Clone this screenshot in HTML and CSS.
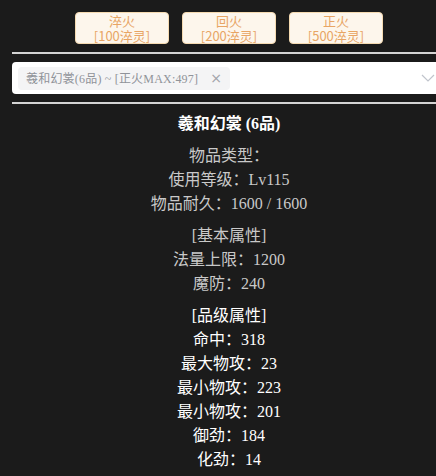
FILE: index.html
```html
<!DOCTYPE html>
<html lang="zh-CN">
<head>
<meta charset="utf-8">
<title>装备</title>
<link rel="stylesheet" href="styles.css">
</head>
<body>
<div class="wrap">
  <div class="btns">
    <button class="btn"><span class="ln">淬火</span><span class="ln">[100淬灵]</span></button>
    <button class="btn"><span class="ln">回火</span><span class="ln">[200淬灵]</span></button>
    <button class="btn"><span class="ln">正火</span><span class="ln">[500淬灵]</span></button>
  </div>
  <div class="rule"></div>
  <div class="select">
    <span class="tag">羲和幻裳(6品) ~ [正火MAX:497]<span class="close">×</span></span>
    <svg class="arrow" viewBox="0 0 14 8" width="14" height="8"><path d="M1 1 L7 7 L13 1" fill="none" stroke="#c0c4cc" stroke-width="1.2"/></svg>
  </div>
  <div class="rule"></div>
  <div class="info">
    <div class="title">羲和幻裳 (6品)</div>
    <div class="group dim">
      <div>物品类型：</div>
      <div>使用等级：Lv115</div>
      <div>物品耐久：1600 / 1600</div>
    </div>
    <div class="group dim">
      <div>[基本属性]</div>
      <div>法量上限：1200</div>
      <div>魔防：240</div>
    </div>
    <div class="group">
      <div>[品级属性]</div>
      <div>命中：318</div>
      <div>最大物攻：23</div>
      <div>最小物攻：223</div>
      <div>最小物攻：201</div>
      <div>御劲：184</div>
      <div>化劲：14</div>
    </div>
  </div>
</div>
</body>
</html>
```
FILE: styles.css
```css
html, body {
  margin: 0;
  padding: 0;
  overflow: hidden;
  background: #1b1b1b;
}
.wrap {
  margin-left: 12px;
  width: 434px;
  font-family: "Liberation Serif", "Noto Sans CJK SC", serif;
}
.btns {
  display: flex;
  justify-content: center;
  gap: 13px;
  padding-top: 12px;
}
.btn {
  font-family: "Noto Sans CJK SC", sans-serif;
  font-size: 13px;
  color: #e8a564;
  background: #fdf6ec;
  border: 1px solid #f5dab1;
  border-radius: 4px;
  width: 94px;
  height: 32px;
  padding: 0;
  margin: 0;
  display: flex;
  flex-direction: column;
  justify-content: center;
  align-items: center;
}
.ln {
  display: block;
  height: 15px;
  line-height: 15px;
  overflow: visible;
}
.rule {
  height: 2px;
  background: #d4d4d4;
  margin-top: 8px;
}
.select {
  margin-top: 8px;
  height: 32px;
  background: #fff;
  border-radius: 4px;
  display: flex;
  align-items: center;
  padding-left: 6px;
  position: relative;
}
.tag {
  display: flex;
  align-items: center;
  height: 23px;
  padding: 0 8px;
  background: #f4f4f5;
  border-radius: 4px;
  color: #909399;
  font-size: 12px;
  letter-spacing: 0.2px;
  white-space: nowrap;
}
.close {
  font-family: "DejaVu Sans", sans-serif;
  font-size: 14px;
  margin-left: 12px;
  color: #a0a3a9;
}
.arrow {
  position: absolute;
  right: 11px;
  top: 12px;
}
.info {
  margin-top: 8px;
  text-align: center;
  font-size: 16px;
  line-height: 24px;
  color: #ffffff;
}
.title {
  font-weight: bold;
}
.group {
  margin-top: 8px;
}
.dim {
  color: #c9c9c9;
}
```
